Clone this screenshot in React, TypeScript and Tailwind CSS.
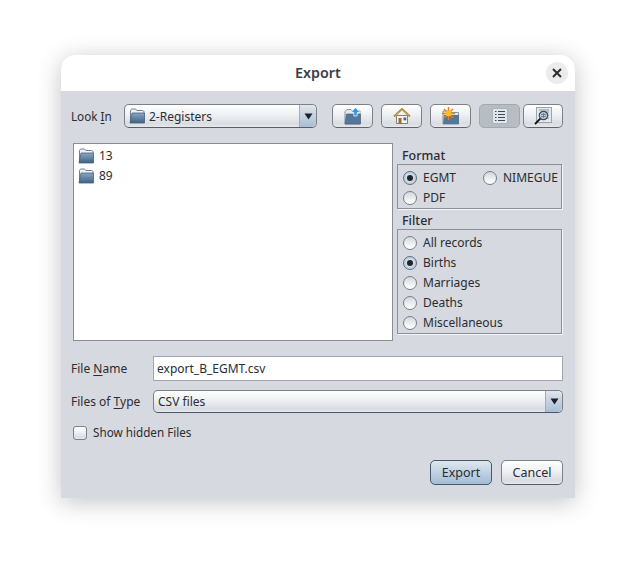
import React from "react";

const btnGrad = "bg-[linear-gradient(to_bottom,#ffffff_0%,#eef0f3_45%,#d9dce2_85%,#e6e8ec_100%)]";

function Folder({ size = 16 }: { size?: number }) {
  return (
    <svg width={size} height={size} viewBox="0 0 16 16" className="shrink-0">
      <defs>
        <linearGradient id="fg" x1="0" y1="0" x2="0" y2="1">
          <stop offset="0" stopColor="#86a6c4" />
          <stop offset="1" stopColor="#3f6285" />
        </linearGradient>
      </defs>
      <path d="M1.500 14.500V3C1.500 1.800 2.300 1 3.300 1H6.500l1.300 1.500h5.700c.8 0 1.500.6 1.500 1.500v2" fill="#eef2f6" stroke="#6d7f90" strokeWidth="1" />
      <path d="M1 15 3 5h12.500v10z" fill="url(#fg)" stroke="#4a6078" strokeWidth="0.8" />
    </svg>
  );
}

function UpIcon() {
  return (
    <svg width="18" height="18" viewBox="0 0 18 18">
      <path d="M1 17V4.500l2-2h4l1.500 1.500h7.500v13z" fill="#e3e9ef" stroke="#6d7f90" strokeWidth="0.8" />
      <path d="M1 17 2.500 7h14v10z" fill="#55779a" stroke="#4a6078" strokeWidth="0.6" />
      <path d="M11.500 0.500 7 5.500h2.800v3.500h3.400v-3.500H16z" fill="#2f97e8" stroke="#ffffff" strokeWidth="0.7" />
    </svg>
  );
}

function HomeIcon() {
  return (
    <svg width="18" height="18" viewBox="0 0 18 18">
      <path d="M3.500 8.500h11v8h-11z" fill="#f6f4ee" stroke="#555" strokeWidth="0.7" />
      <path d="M1 9.500 9 2l8 7.500" fill="none" stroke="#a5822a" strokeWidth="2" />
      <path d="M1.500 9 9 2.800 16.500 9" fill="none" stroke="#e2c878" strokeWidth="0.7" />
      <rect x="5.500" y="11" width="3" height="5.500" fill="#a06a2a" />
      <rect x="10.500" y="10.500" width="2.800" height="2.800" fill="#3f6c9c" />
    </svg>
  );
}

function NewFolderIcon() {
  return (
    <svg width="18" height="18" viewBox="0 0 18 18">
      <path d="M1 17V4h5l1.500 1.500h9V17z" fill="#e3e9ef" stroke="#6d7f90" strokeWidth="0.8" />
      <path d="M1 17 2 8h15v9z" fill="#55779a" />
      <g stroke="#f07a1a" strokeWidth="1.400">
        <path d="M6.500 0v13M0 6.500h13M2 2l9 9M11 2l-9 9" />
      </g>
      <circle cx="6.500" cy="6.500" r="3" fill="#f8c020" />
    </svg>
  );
}

function ListIcon() {
  return (
    <svg width="16" height="16" viewBox="0 0 16 16">
      <rect x="0.500" y="0.500" width="15" height="15" fill="#dfe6ec" stroke="#aab4be" />
      <g stroke="#3a4a58" strokeWidth="1">
        <path d="M3 3.500h1.500M6 3.500h7M3 6.500h1.500M6 6.500h7M3 9.500h1.500M6 9.500h7M3 12.500h1.500M6 12.500h7" />
      </g>
    </svg>
  );
}

function DetailsIcon() {
  return (
    <svg width="18" height="18" viewBox="0 0 18 18">
      <rect x="2.500" y="0.500" width="15" height="15" fill="#e3e8ed" stroke="#9aa4ae" />
      <g stroke="#8a96a2" strokeWidth="1">
        <path d="M5 3h10M12 5h3M13 8h2M13 11h2" />
      </g>
      <circle cx="9.500" cy="8.500" r="4.200" fill="#b9cbdb" stroke="#3d4d5c" strokeWidth="1.200" />
      <path d="M7 7.500h5M7 9.500h5M9.500 6v5" stroke="#5a6a78" strokeWidth="0.700" />
      <path d="M6.300 11.700 1 17" stroke="#111" strokeWidth="1.800" />
    </svg>
  );
}

function ToolBtn({ children, active, w = "w-[41px]" }: { children: React.ReactNode; active?: boolean; w?: string }) {
  return (
    <div
      className={`${w} h-[24px] rounded-[5px] border flex items-center justify-center ${
        active ? "bg-[#b8bcc3] border-[#a4a8ae]" : `${btnGrad} border-[#7d8084] border-b-[#5f6266]`
      }`}
    >
      {children}
    </div>
  );
}

function Radio({ on }: { on?: boolean }) {
  return (
    <span
      className={`w-[14px] h-[14px] rounded-full border shrink-0 flex items-center justify-center ${
        on
          ? "bg-[radial-gradient(circle,#eaf0f6_0%,#a9c0d6_100%)] border-[#5f6f80]"
          : "bg-[linear-gradient(to_bottom,#d3d6dc_0%,#f4f5f7_70%,#ffffff_100%)] border-[#7a7e84]"
      }`}
    >
      {on && <span className="w-[6px] h-[6px] rounded-full bg-[#20242a]" />}
    </span>
  );
}

function Opt({ label, on, className = "" }: { label: string; on?: boolean; className?: string }) {
  return (
    <div className={`flex items-center gap-[6px] h-[20px] ${className}`}>
      <Radio on={on} />
      <span className="whitespace-nowrap">{label}</span>
    </div>
  );
}

function Arrow() {
  return (
    <div className="w-[17px] self-stretch ml-auto border-l border-[#a6acb4] rounded-r-[5px] bg-[linear-gradient(to_bottom,#dfe5ec_0%,#bfd0e0_55%,#a9bfd4_100%)] flex items-center justify-center">
      <svg width="9" height="7" viewBox="0 0 9 7">
        <path d="M0.500 0.500h8L4.500 6.500z" fill="#1d2126" />
      </svg>
    </div>
  );
}

function U({ children }: { children: React.ReactNode }) {
  return <span className="underline underline-offset-2">{children}</span>;
}

export default function App() {
  return (
    <div className="w-[636px] h-[564px] bg-white overflow-hidden pt-[55px] pl-[61px] font-['Noto_Sans',sans-serif] text-[12px] leading-[16px] text-[#2a2d31]">
      <div className="w-[514px] h-[443px] rounded-t-[14px] bg-[#d6d9e0] shadow-[0_4px_24px_rgba(0,0,0,0.24)] flex flex-col overflow-hidden">
        <div className="h-[36px] bg-white shrink-0 flex items-center justify-center relative">
          <span className="font-semibold text-[14.3px] text-[#3a3d42]">Export</span>
          <div className="absolute right-[7px] top-[7px] w-[22px] h-[22px] rounded-full bg-[#ececec] flex items-center justify-center">
            <svg width="10" height="10" viewBox="0 0 10 10">
              <path d="M1 1l8 8M9 1l-8 8" stroke="#2a2d31" strokeWidth="2" />
            </svg>
          </div>
        </div>

        <div className="flex-1 pt-[13px] pl-[10px] pr-[12px] flex flex-col">
          <div className="flex items-center h-[24px]">
            <span className="w-[53px] text-[11.7px]">Look <U>I</U>n</span>
            <div className={`w-[193px] h-[24px] rounded-[5px] border border-[#7d8084] border-b-[#5a5d61] flex items-center ${btnGrad}`}>
              <span className="ml-[4px] mr-[4px]"><Folder /></span>
              <span className="pt-[1px]">2-Registers</span>
              <Arrow />
            </div>
            <div className="ml-[15px] flex gap-[8px]">
              <ToolBtn><UpIcon /></ToolBtn>
              <ToolBtn><HomeIcon /></ToolBtn>
              <ToolBtn><NewFolderIcon /></ToolBtn>
              <ToolBtn active><ListIcon /></ToolBtn>
            </div>
            <div className="ml-[3px]">
              <ToolBtn w="w-[40px]"><DetailsIcon /></ToolBtn>
            </div>
          </div>

          <div className="flex mt-[15px] pl-[2px]">
            <div className="w-[320px] h-[198px] bg-white border border-[#8a8e94] pl-[4px] pt-[2px]">
              <div className="flex items-center gap-[5px] h-[20px]"><Folder /><span>13</span></div>
              <div className="flex items-center gap-[5px] h-[20px]"><Folder /><span>89</span></div>
            </div>
            <div className="w-[165px] ml-[4px] pt-[4px]">
              <div className="pl-[5px] h-[17px] pt-[1px] text-[12.5px] font-medium">Format</div>
              <div className="border border-[#8d9197] h-[45px] pl-[5px] pr-[2px] pt-[3px] shadow-[1px_1px_0_#f4f5f7]">
                <div className="flex">
                  <Opt label="EGMT" on className="w-[80px]" />
                  <Opt label="NIMEGUE" />
                </div>
                <Opt label="PDF" />
              </div>
              <div className="pl-[5px] h-[17px] mt-[3px] pt-[1px] text-[12.5px] font-medium">Filter</div>
              <div className="border border-[#8d9197] h-[105px] pl-[5px] pt-[3px] shadow-[1px_1px_0_#f4f5f7]">
                <Opt label="All records" />
                <Opt label="Births" on />
                <Opt label="Marriages" />
                <Opt label="Deaths" />
                <Opt label="Miscellaneous" />
              </div>
            </div>
          </div>

          <div className="flex items-center mt-[15px] h-[25px]">
            <span className="w-[82px]">File <U>N</U>ame</span>
            <div className="w-[410px] h-[25px] bg-white border border-[#a2a6ac] flex items-center pl-[3px]">export_B_EGMT.csv</div>
          </div>
          <div className="flex items-center mt-[9px] h-[23px]">
            <span className="w-[82px]">Files of <U>T</U>ype</span>
            <div className={`w-[410px] h-[23px] rounded-[5px] border border-[#7d8084] border-b-[#46586a] flex items-center pl-[4px] ${btnGrad}`}>
              <span>CSV files</span>
              <Arrow />
            </div>
          </div>
          <div className="flex items-center mt-[12px] h-[16px] pl-[2px]">
            <span className={`w-[14px] h-[14px] rounded-[3px] border border-[#7d8084] ${btnGrad}`} />
            <span className="ml-[6px] mb-[2px] text-[11.7px]">Show hidden Files</span>
          </div>

          <div className="flex justify-end gap-[9px] mt-[19px] text-[12.5px]">
            <div className="w-[62px] h-[25px] rounded-[5px] border border-[#46586a] bg-[linear-gradient(to_bottom,#dfe7ef_0%,#bccfe0_55%,#a3bcd3_100%)] flex items-center justify-center">Export</div>
            <div className={`w-[62px] h-[25px] rounded-[5px] border border-[#7d8084] border-b-[#5a5d61] flex items-center justify-center ${btnGrad}`}>Cancel</div>
          </div>
        </div>
      </div>
    </div>
  );
}
